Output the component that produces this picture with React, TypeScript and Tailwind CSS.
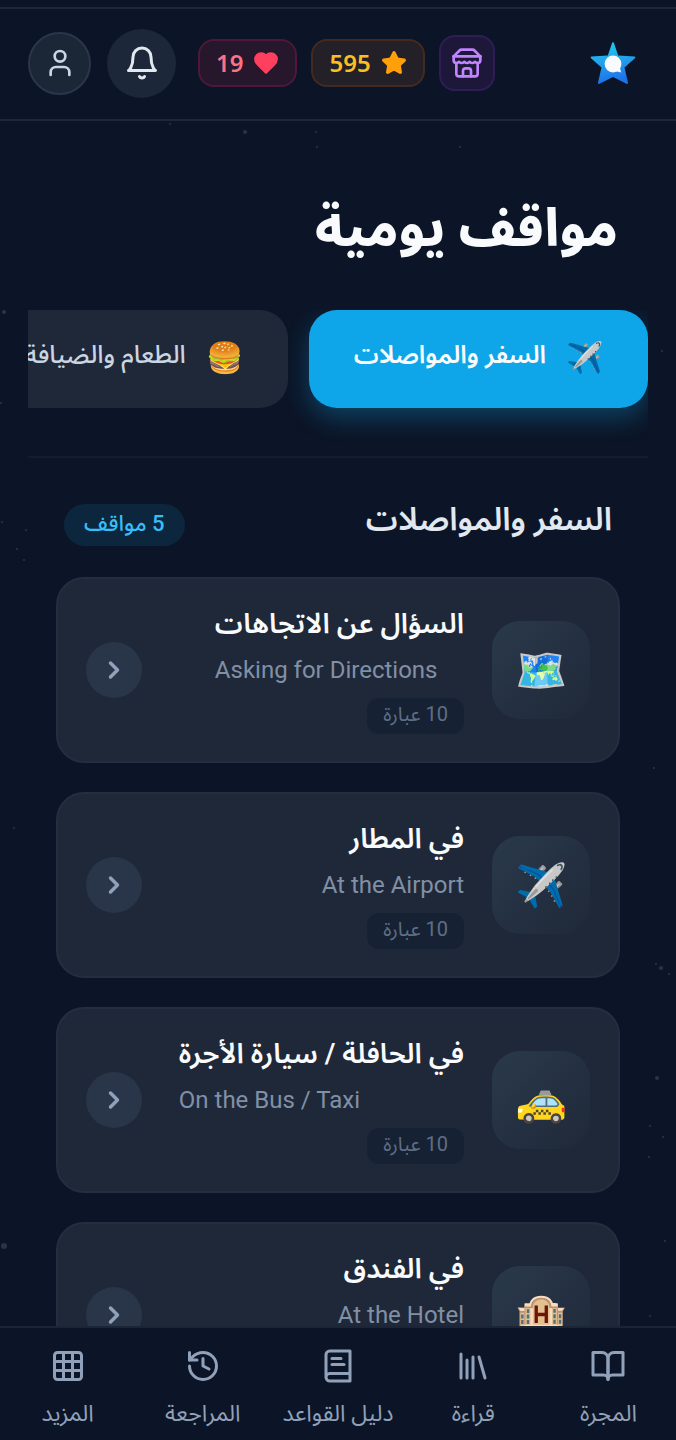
import type { ReactNode } from "react";
import { ChevronRight, Grid3x3, History, Library, Star, User } from "lucide-react";

type IconProps = { className?: string; children?: ReactNode };

function StrokeIcon({ className, children }: IconProps) {
    return (
        <svg
            viewBox="0 0 24 24"
            fill="none"
            stroke="currentColor"
            strokeWidth={2}
            strokeLinecap="round"
            strokeLinejoin="round"
            className={className}
            aria-hidden="true"
        >
            {children}
        </svg>
    );
}

function BellIcon({ className }: IconProps) {
    return (
        <StrokeIcon className={className}>
            <path d="M6 8a6 6 0 0 1 12 0c0 7 3 9 3 9H3s3-2 3-9" />
            <path d="M10.3 21a1.94 1.94 0 0 0 3.4 0" />
        </StrokeIcon>
    );
}

function HeartIcon({ className }: IconProps) {
    return (
        <StrokeIcon className={className}>
            <path
                fill="currentColor"
                d="M19 14c1.49-1.46 3-3.21 3-5.5A5.5 5.5 0 0 0 16.5 3c-1.76 0-3 .5-4.5 2-1.5-1.5-2.74-2-4.5-2A5.5 5.5 0 0 0 2 8.5c0 2.3 1.5 4.05 3 5.5l7 7Z"
            />
        </StrokeIcon>
    );
}

function StoreIcon({ className }: IconProps) {
    return (
        <StrokeIcon className={className}>
            <path d="m2 7 4.41-4.41A2 2 0 0 1 7.83 2h8.34a2 2 0 0 1 1.42.59L22 7" />
            <path d="M4 12v8a2 2 0 0 0 2 2h12a2 2 0 0 0 2-2v-8" />
            <path d="M15 22v-4a2 2 0 0 0-2-2h-2a2 2 0 0 0-2 2v4" />
            <path d="M2 7h20" />
            <path d="M22 7v3a2 2 0 0 1-2 2a2.7 2.7 0 0 1-1.59-.63.7.7 0 0 0-.82 0A2.7 2.7 0 0 1 16 12a2.7 2.7 0 0 1-1.59-.63.7.7 0 0 0-.82 0A2.7 2.7 0 0 1 12 12a2.7 2.7 0 0 1-1.59-.63.7.7 0 0 0-.82 0A2.7 2.7 0 0 1 8 12a2.7 2.7 0 0 1-1.59-.63.7.7 0 0 0-.82 0A2.7 2.7 0 0 1 4 12a2 2 0 0 1-2-2V7" />
        </StrokeIcon>
    );
}

function BookOpenIcon({ className }: IconProps) {
    return (
        <StrokeIcon className={className}>
            <path d="M2 3h6a4 4 0 0 1 4 4v14a3 3 0 0 0-3-3H2z" />
            <path d="M22 3h-6a4 4 0 0 0-4 4v14a3 3 0 0 1 3-3h7z" />
        </StrokeIcon>
    );
}

function BookTextIcon({ className }: IconProps) {
    return (
        <StrokeIcon className={className}>
            <path d="M4 19.5v-15A2.5 2.5 0 0 1 6.5 2H20v20H6.5a2.5 2.5 0 0 1 0-5H20" />
            <path d="M8 7h6" />
            <path d="M8 11h8" />
        </StrokeIcon>
    );
}

function Logo() {
    return (
        <svg viewBox="0 0 46 44" className="h-11 w-[46px]" aria-hidden="true">
            <defs>
                <linearGradient id="logo" x1="0" y1="0" x2="0.2" y2="1">
                    <stop offset="0" stopColor="#22d3ee" />
                    <stop offset="0.5" stopColor="#22a3ea" />
                    <stop offset="1" stopColor="#1d72ea" />
                </linearGradient>
            </defs>
            <path
                d="M22 2.2a1 1 0 0 1 2 0L28.2 14.6 44.5 15.6a1 1 0 0 1 .5 1.6L34.5 26.5 38 41.8a1 1 0 0 1-1.5 1L23 36 9.5 42.8a1 1 0 0 1-1.5-1L11.5 26.5 1 17.2a1 1 0 0 1 .5-1.6L17.8 14.6Z"
                fill="url(#logo)"
            />
            <circle cx="23" cy="23" r="8.4" fill="#f8fafc" />
            <path d="m25 30 6.2 1.6-1.8-6.6Z" fill="#f8fafc" />
        </svg>
    );
}

const stars = [
    [245, 132, 2], [170, 124, 1], [316, 132, 1], [317, 147, 1], [460, 147, 1], [4, 312, 2],
    [662, 351, 1], [1, 403, 1], [26, 530, 1], [17, 549, 1], [24, 560, 1], [654, 768, 1],
    [656, 964, 1], [661, 968, 2], [669, 974, 1], [657, 1078, 2], [650, 1126, 1],
    [663, 1137, 1], [649, 1157, 1], [4, 1246, 3], [665, 1241, 1], [650, 1316, 1], [14, 828, 1], [2, 522, 1],
];

function Starfield() {
    return (
        <svg className="pointer-events-none absolute inset-0 h-full w-full" aria-hidden="true">
            {stars.map(([x, y, r]) => (
                <circle key={`${x}-${y}`} cx={x} cy={y} r={r} fill="#94a3b8" opacity="0.22" />
            ))}
        </svg>
    );
}

const categories = [
    { emoji: "✈️", label: "السفر والمواصلات", active: true },
    { emoji: "🍔", label: "الطعام والضيافة", active: false },
];

const situations = [
    { emoji: "🗺️", title: "السؤال عن الاتجاهات", english: "Asking for Directions" },
    { emoji: "✈️", title: "في المطار", english: "At the Airport" },
    { emoji: "🚕", title: "في الحافلة / سيارة الأجرة", english: "On the Bus / Taxi" },
    { emoji: "🏨", title: "في الفندق", english: "At the Hotel" },
];

const navItems = [
    { label: "المجرة", Icon: BookOpenIcon },
    { label: "قراءة", Icon: Library },
    { label: "دليل القواعد", Icon: BookTextIcon },
    { label: "المراجعة", Icon: History },
    { label: "المزيد", Icon: Grid3x3 },
];

function Header() {
    return (
        <header className="relative mt-[7px] flex h-[114px] shrink-0 items-center justify-between border-y-2 border-[#1e2839] px-7 pb-0.5">
            <a href="#" aria-label="الرئيسية" className="px-3">
                <Logo />
            </a>
            <div className="flex items-center gap-3.5">
                <button aria-label="المتجر" className="flex size-14 items-center justify-center rounded-2xl border-2 border-[#2f1d57] bg-[#1d183a] text-[#c084fc]">
                    <StoreIcon className="size-8" />
                </button>
                <div className="flex items-center gap-3.5">
                    <div className="flex h-12 items-center gap-2.5 rounded-2xl border-2 border-[#432a20] bg-[#232027] px-4 font-['Noto_Sans'] text-2xl font-semibold text-[#fbbf24]">
                        <Star className="size-[26px] fill-[#ff9f0a] text-[#ff9f0a]" />
                        <span>595</span>
                    </div>
                    <div className="flex h-12 items-center gap-2.5 rounded-2xl border-2 border-[#50173a] bg-[#26172c] px-4 font-['Noto_Sans'] text-2xl font-semibold text-[#fb7185]">
                        <HeartIcon className="size-[26px] text-[#ff3f5e]" />
                        <span>19</span>
                    </div>
                </div>
                <div className="flex items-center gap-4 ps-2">
                    <button aria-label="الإشعارات" className="flex size-[69px] items-center justify-center rounded-full bg-[#1c2739] text-slate-200">
                        <BellIcon className="size-9" />
                    </button>
                    <button aria-label="الحساب" className="flex size-[63px] items-center justify-center rounded-full border-2 border-[#2a3649] bg-[#1b2637] text-slate-300">
                        <User className="size-8" />
                    </button>
                </div>
            </div>
        </header>
    );
}

function SituationCard({ emoji, title, english }: { emoji: string; title: string; english: string }) {
    return (
        <li>
            <a href="#" className="flex h-[186px] items-center gap-7 rounded-[28px] border-2 border-[#232f41] bg-[#1f2839] px-7">
                <span className="flex size-[98px] shrink-0 items-center justify-center rounded-[28px] bg-linear-to-br from-[#2a3a4b] to-[#1f2839] text-[42px]">
                    {emoji}
                </span>
                <span className="flex flex-col items-start pb-0.5">
                    <span className="text-[28px] leading-10 font-semibold text-slate-50">{title}</span>
                    <span dir="ltr" className="mt-2 self-stretch text-2xl leading-9 text-[#8190a5]">{english}</span>
                    <span className="mt-2.5 flex h-9 items-center rounded-xl bg-[#172134] px-4 pb-1 text-xl text-[#5f6e83]">10 عبارة</span>
                </span>
                <span className="ms-auto flex size-14 shrink-0 items-center justify-center rounded-full bg-[#293649] text-slate-400">
                    <ChevronRight className="size-7" strokeWidth={3} />
                </span>
            </a>
        </li>
    );
}

export default function App() {
    return (
        <div dir="rtl" lang="ar" className="relative flex h-screen flex-col overflow-hidden bg-[#0c1527] font-[Roboto,'Noto_Sans_Arabic','Noto_Sans','DejaVu_Sans',sans-serif]">
            <Starfield />
            <Header />

            <main className="relative min-h-0 flex-1 overflow-hidden px-7">
                <h1 className="mt-[68px] px-[30px] text-[52px] leading-[80px] font-extrabold text-slate-50">مواقف يومية</h1>

                {/* Category tabs */}
                <div className="mt-[41px] flex gap-[21px] overflow-hidden border-b-2 border-[#131d2e] pb-12">
                    {categories.map(({ emoji, label, active }) => (
                        <button
                            key={label}
                            className={
                                active
                                    ? "flex h-[98px] shrink-0 items-center gap-5 rounded-[28px] bg-[#0ea5e9] px-[45px] pb-1 text-[25px] font-semibold whitespace-nowrap text-slate-50 shadow-[0_10px_24px_rgba(14,165,233,0.3)]"
                                    : "flex h-[98px] shrink-0 items-center gap-5 rounded-[28px] bg-[#1f2839] px-[45px] pb-1 text-[25px] font-medium whitespace-nowrap text-slate-300"
                            }
                        >
                            <span className="text-[30px]">{emoji}</span>
                            <span className="pb-1">{label}</span>
                        </button>
                    ))}
                </div>

                {/* Situations */}
                <section className="px-7">
                    <div className="mt-[37px] flex h-[60px] items-center justify-between px-2">
                        <h2 className="pb-3 text-[32px] font-semibold text-slate-200">السفر والمواصلات</h2>
                        <span className="flex h-[42px] items-center rounded-full bg-[#0c263d] px-5 pb-1 text-[22px] font-medium text-[#38bdf8]">5 مواقف</span>
                    </div>
                    <ul className="mt-[22px] flex flex-col gap-[29px]">
                        {situations.map((item) => (
                            <SituationCard key={item.title} {...item} />
                        ))}
                    </ul>
                </section>
            </main>

            <nav className="relative grid h-[114px] shrink-0 grid-cols-5 border-t-2 border-[#1b2536] bg-[#0c1527] text-slate-400">
                {navItems.map(({ label, Icon }) => (
                    <a key={label} href="#" className="flex flex-col items-center gap-3.5 pt-5 text-[23px] leading-8 whitespace-nowrap">
                        <Icon className="size-9" />
                        {label}
                    </a>
                ))}
            </nav>
        </div>
    );
}
